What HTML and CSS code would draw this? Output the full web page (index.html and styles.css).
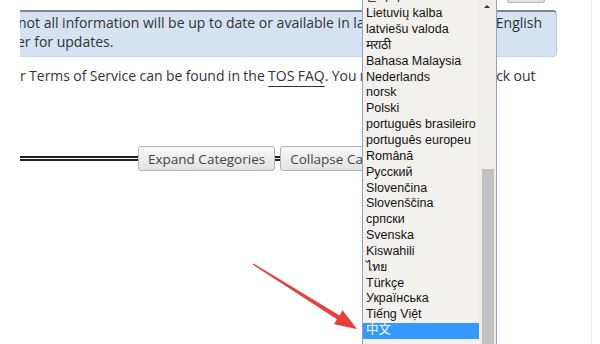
FILE: index.html
```html
<!DOCTYPE html>
<html lang="en">
<head>
<meta charset="utf-8">
<title>Language selection</title>
<link rel="stylesheet" href="styles.css">
</head>
<body>
<div class="frame">
  <div class="page">
    <div class="stub-row"><span class="stub"></span></div>
    <div class="notice">
      <div class="nline l1">not all information will be up to date or available in languages other than English</div>
      <div class="nline l2">er for updates.</div>
    </div>
    <p class="tos">r Terms of Service can be found in the <a href="#">TOS FAQ</a>. You may also want to check out</p>
    <div class="cat-bar">
      <span class="dline long"></span>
      <button class="btn">Expand Categories</button>
      <span class="dline short"></span>
      <button class="btn">Collapse Categories</button>
    </div>
  </div>
</div>

<div class="lang">
  <div class="items">
    <div class="item">한국어</div>
    <div class="item">Lietuvių kalba</div>
    <div class="item">latviešu valoda</div>
    <div class="item">मराठी</div>
    <div class="item">Bahasa Malaysia</div>
    <div class="item">Nederlands</div>
    <div class="item">norsk</div>
    <div class="item">Polski</div>
    <div class="item">português brasileiro</div>
    <div class="item">português europeu</div>
    <div class="item">Română</div>
    <div class="item">Русский</div>
    <div class="item">Slovenčina</div>
    <div class="item">Slovenščina</div>
    <div class="item">српски</div>
    <div class="item">Svenska</div>
    <div class="item">Kiswahili</div>
    <div class="item">ไทย</div>
    <div class="item">Türkçe</div>
    <div class="item">Українська</div>
    <div class="item">Tiếng Việt</div>
    <div class="item sel">中文</div>
  </div>
  <div class="sb">
    <span class="sb-up"></span>
    <span class="sb-thumb"></span>
  </div>
</div>

<svg class="arrow" width="600" height="344" viewBox="0 0 600 344" aria-hidden="true">
  <polygon points="253.3,263.4 339.6,315.4 342.5,310.3 357,329 334,324.3 337,319.2 252.7,264.6" fill="#e8403a"/>
</svg>
</body>
</html>
```
FILE: styles.css
```css
* { box-sizing: border-box; }
html, body { margin: 0; padding: 0; background: #fff; }
body {
  width: 600px;
  height: 344px;
  overflow: hidden;
  position: relative;
  font-family: "Open Sans", "DejaVu Sans", sans-serif;
  color: #333;
}
.frame {
  width: 592px;
  height: 344px;
  border-right: 1px solid #ececec;
}
.page {
  margin-left: 20px;
  width: 537px;
  overflow: hidden;
}
.stub-row { height: 10px; }
.stub {
  display: block;
  margin-left: 487px;
  width: 38px;
  height: 3px;
  background: #e4e4e4;
  border: 1px solid #b5b5b5;
  border-top: none;
  border-radius: 0 0 4px 4px;
}
.notice {
  background: #d4e2f1;
  border-top: 2px solid #7f8891;
  border-right: 1px solid #b9c9da;
  border-bottom: 1px solid #c9d7e6;
  border-radius: 0 4px 4px 0;
  padding: 1px 0 5px 0;
  font-size: 14px;
  line-height: 19px;
}
.nline { white-space: nowrap; }
.l1 { margin-left: -2px; }
.l2 { margin-left: -3px; }
.tos {
  margin: 9px 0 0;
  font-size: 14px;
  line-height: 19px;
  white-space: nowrap;
  word-spacing: -0.3px;
}
.tos a {
  color: #333;
  text-decoration: underline;
  text-underline-offset: 5px;
}
.cat-bar {
  display: flex;
  align-items: center;
  margin-top: 61px;
  height: 25px;
}
.dline {
  display: block;
  height: 5px;
  border-top: 2px solid #222;
  border-bottom: 2px solid #222;
  flex: none;
}
.dline.long { width: 118px; }
.dline.short { width: 5px; }
.btn {
  flex: none;
  height: 25px;
  padding: 0 9px;
  border: 1px solid #b4b4b4;
  border-radius: 3px;
  background: linear-gradient(#f8f8f8, #e2e2e2);
  font-family: "Open Sans", "DejaVu Sans", sans-serif;
  font-size: 13.5px;
  color: #444;
  white-space: nowrap;
}
.lang {
  position: absolute;
  left: 362px;
  top: 0;
  width: 135px;
  height: 344px;
  border-left: 1px solid #8ea4c4;
  border-right: 1px solid #8ea4c4;
  background: #f3f1ee;
  display: flex;
  overflow: hidden;
  font-family: "Liberation Sans", Arial, "Noto Sans CJK KR", "Noto Sans CJK SC", sans-serif;
  font-size: 12.5px;
  color: #111;
}
.items {
  flex: 1;
  margin-top: -9.6px;
}
.item {
  height: 15.85px;
  line-height: 15.85px;
  padding-left: 3px;
  white-space: nowrap;
}
.item.sel {
  background: #3399ff;
  color: #fff;
}
.sb {
  width: 17px;
  flex: none;
  background: #f0efec;
  display: flex;
  flex-direction: column;
}
.sb-up {
  display: block;
  margin: 5px 0 0 5px;
  width: 0;
  height: 0;
  border-left: 3px solid transparent;
  border-right: 3px solid transparent;
  border-bottom: 3px solid #333;
}
.sb-thumb {
  display: block;
  margin: 161px 0 0 3px;
  width: 12px;
  flex: 1;
  background: #c2c2c2;
}
.arrow {
  position: absolute;
  left: 0;
  top: 0;
  pointer-events: none;
}
```
